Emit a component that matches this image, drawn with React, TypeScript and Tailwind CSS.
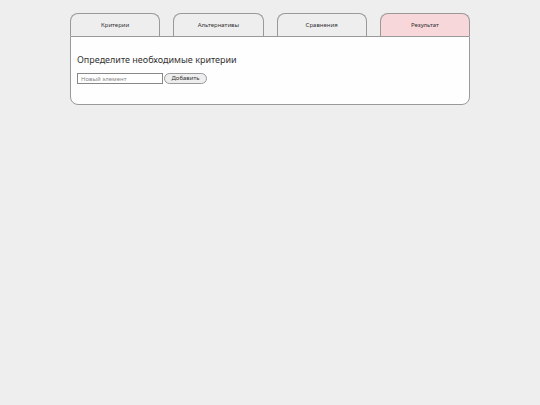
import { useState } from "react"
import clsx from "clsx"

const tabs = ["Критерии", "Альтернативы", "Сравнения", "Результат"]

export default function App() {
  const [value, setValue] = useState("")

  return (
    <div className="min-h-screen bg-[#eeeeee] pt-[13px] font-['Noto_Sans','Open_Sans',sans-serif] text-[#333333]">
      <div className="mx-auto w-full max-w-[400px]">
        <nav className="grid grid-cols-4 gap-[13px]">
          {tabs.map((tab) => (
            <button
              key={tab}
              type="button"
              className={clsx(
                "h-[23px] rounded-t-[8px] border border-b-0 border-[#999999] text-[6px] leading-[8px]",
                tab === "Результат" ? "bg-[#f8d7da]" : "bg-[#eeeeee]"
              )}
            >
              {tab}
            </button>
          ))}
        </nav>

        <main className="rounded-b-[8px] border border-[#999999] bg-[#fefefe] px-[6px] pt-[16px] pb-[20px]">
          <h1 className="text-[9px] leading-[14px]">Определите необходимые критерии</h1>
          <form className="mt-[6px] flex gap-[1px]" onSubmit={(e) => e.preventDefault()}>
            <input
              type="text"
              aria-label="Новый элемент"
              placeholder="Новый элемент"
              value={value}
              onChange={(e) => setValue(e.target.value)}
              className="h-[11px] w-[86px] border border-[#888888] bg-white px-[3px] text-[6px] leading-[9px] placeholder:text-[#888888]"
            />
            <button
              type="submit"
              className="h-[11px] w-[43px] rounded-full border border-[#999999] bg-[#eeeeee] text-[6px] leading-[9px]"
            >
              Добавить
            </button>
          </form>
        </main>
      </div>
    </div>
  )
}
